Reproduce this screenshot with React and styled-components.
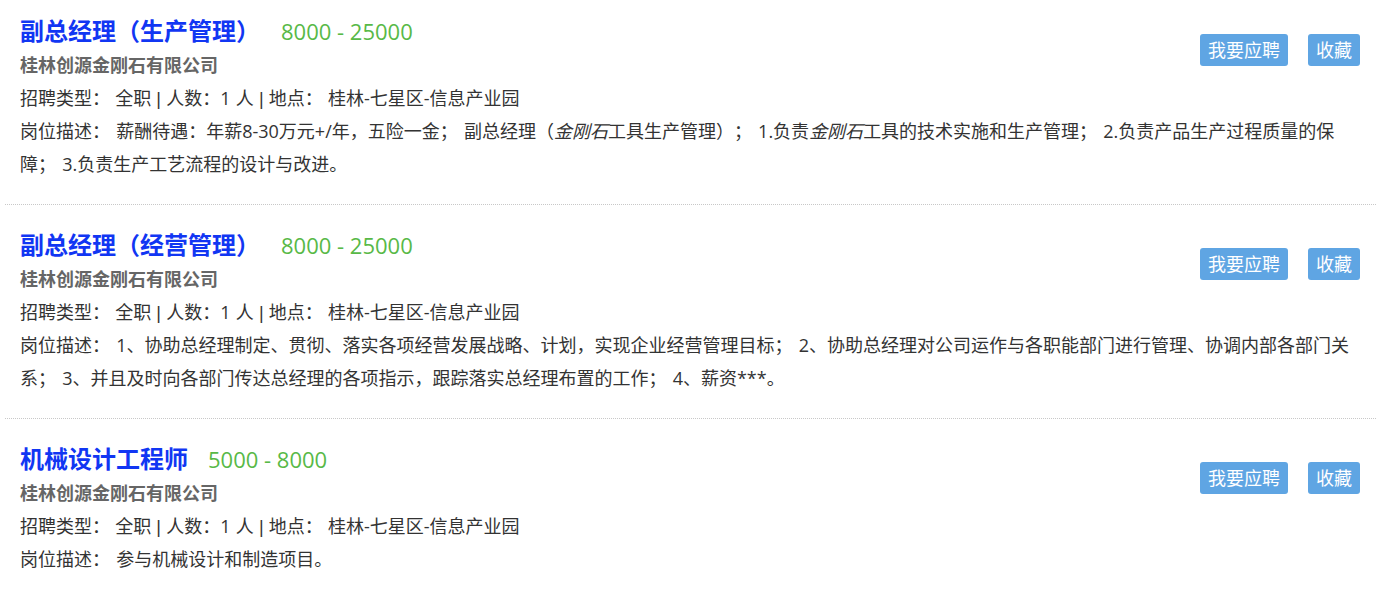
import React from 'react';
import styled, { createGlobalStyle } from 'styled-components';

const GlobalStyle = createGlobalStyle`
  html, body {
    margin: 0;
    padding: 0;
    background: #fff;
    overflow: hidden;
  }
  body {
    font-family: "Open Sans", "Noto Sans CJK SC", sans-serif;
    color: #333;
    text-spacing-trim: space-all;
  }
`;

const JobList = styled.ul`
  list-style: none;
  margin: -9px 0 0 5px;
  padding: 0;
`;

const JobItem = styled.li`
  padding: 22px 16px 23px 15px;
  border-bottom: 1px dotted #c8c8c8;
`;

const Header = styled.div`
  display: flex;
  align-items: center;
  justify-content: space-between;
`;

const HeaderText = styled.div`
  display: flex;
  flex-direction: column;
`;

const TitleRow = styled.div`
  display: flex;
  align-items: baseline;
  height: 36px;
  line-height: 36px;
`;

const Title = styled.a`
  font-size: 24px;
  font-weight: 700;
  color: #1136f3;
  text-decoration: none;
`;

const Salary = styled.span`
  margin-left: ${({ $gap }) => $gap}px;
  font-size: 22px;
  color: #58b947;
`;

const Company = styled.div`
  font-size: 18px;
  font-weight: 700;
  color: #666;
  line-height: 33px;
`;

const Actions = styled.div`
  display: flex;
  gap: 20px;
  margin-top: 5px;
`;

const ActionButton = styled.button`
  height: 32px;
  padding: 0 8px;
  border: none;
  border-radius: 3px;
  background: #5fa5e3;
  color: #fff;
  font-family: "Open Sans", "Noto Sans CJK SC", sans-serif;
  font-size: 18px;
  line-height: 32px;
  cursor: pointer;
`;

const Line = styled.div`
  font-size: 18px;
  line-height: 33px;
  word-spacing: ${({ $spacing }) => $spacing}px;
  color: #333;

  em {
    font-style: italic;
  }
`;

// narrow pipe between the meta fields
const Sep = styled.span`
  font-family: "Liberation Sans", sans-serif;
  line-height: 1;
`;

const jobs = [
  {
    title: '副总经理（生产管理）',
    salary: '8000 - 25000',
    gap: 21,
    desc: (
      <>
        薪酬待遇：年薪8-30万元+/年，五险一金； 副总经理（<em>金刚石</em>工具生产管理）；
        1.负责<em>金刚石</em>工具的技术实施和生产管理； 2.负责产品生产过程质量的保障；
        3.负责生产工艺流程的设计与改进。
      </>
    ),
  },
  {
    title: '副总经理（经营管理）',
    salary: '8000 - 25000',
    gap: 21,
    desc: '1、协助总经理制定、贯彻、落实各项经营发展战略、计划，实现企业经营管理目标； 2、协助总经理对公司运作与各职能部门进行管理、协调内部各部门关系； 3、并且及时向各部门传达总经理的各项指示，跟踪落实总经理布置的工作； 4、薪资***。',
  },
  {
    title: '机械设计工程师',
    salary: '5000 - 8000',
    gap: 20,
    desc: '参与机械设计和制造项目。',
  },
];

const App = () => (
  <>
    <GlobalStyle />
    <JobList>
      {jobs.map((job) => (
        <JobItem key={job.title}>
          <Header>
            <HeaderText>
              <TitleRow>
                <Title href="#">{job.title}</Title>
                <Salary $gap={job.gap}>{job.salary}</Salary>
              </TitleRow>
              <Company>桂林创源金刚石有限公司</Company>
            </HeaderText>
            <Actions>
              <ActionButton>我要应聘</ActionButton>
              <ActionButton>收藏</ActionButton>
            </Actions>
          </Header>
          <Line $spacing={0.5}>
            招聘类型： 全职 <Sep>|</Sep> 人数：1 人 <Sep>|</Sep> 地点： 桂林-七星区-信息产业园
          </Line>
          <Line $spacing={1.5}>岗位描述： {job.desc}</Line>
        </JobItem>
      ))}
    </JobList>
  </>
);

export default App;
